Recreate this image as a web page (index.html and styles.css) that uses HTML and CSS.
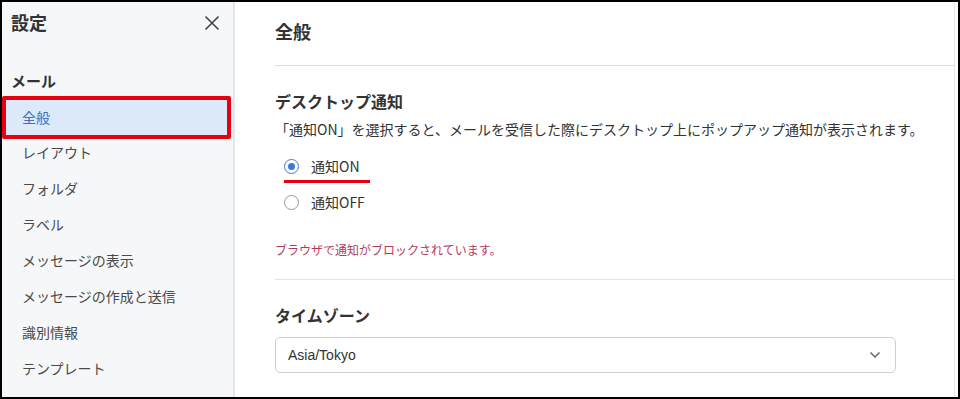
FILE: index.html
```html
<!DOCTYPE html>
<html lang="ja">
<head>
<meta charset="UTF-8">
<meta name="viewport" content="width=device-width, initial-scale=1.0">
<title>設定</title>
<link rel="stylesheet" href="styles.css">
</head>
<body>

<div class="frame">
  <!-- Sidebar -->
  <div class="sidebar">
    <div class="sidebar-head">
      <h1>設定</h1>
      <span class="close">
        <svg width="16" height="16" viewBox="0 0 16 16"><path d="M1.5 1.5 L14.5 14.5 M14.5 1.5 L1.5 14.5" stroke="#444" stroke-width="1.6" fill="none"/></svg>
      </span>
    </div>
    <div class="nav-group">メール</div>
    <ul class="nav">
      <li class="active">全般</li>
      <li>レイアウト</li>
      <li>フォルダ</li>
      <li>ラベル</li>
      <li>メッセージの表示</li>
      <li>メッセージの作成と送信</li>
      <li>識別情報</li>
      <li>テンプレート</li>
    </ul>
  </div>

  <!-- Main -->
  <div class="main">
    <div class="panel">
      <h2 class="page-title">全般</h2>

      <div class="section">
        <h3>デスクトップ通知</h3>
        <p class="desc">「通知ON」を選択すると、メールを受信した際にデスクトップ上にポップアップ通知が表示されます。</p>
        <label class="radio marked"><span class="dot checked"></span>通知ON</label>
        <label class="radio"><span class="dot"></span>通知OFF</label>
        <p class="warn">ブラウザで通知がブロックされています。</p>
      </div>

      <div class="section last">
        <h3>タイムゾーン</h3>
        <div class="select">
          <span>Asia/Tokyo</span>
          <svg width="12" height="8" viewBox="0 0 12 8"><path d="M1.5 1.5 L6 6 L10.5 1.5" stroke="#666" stroke-width="1.5" fill="none"/></svg>
        </div>
      </div>
    </div>
  </div>
</div>

</body>
</html>
```

FILE: styles.css
```css
* {
  box-sizing: border-box;
}
body {
  margin: 0;
  font-family: 'Noto Sans CJK JP', 'Noto Sans', sans-serif;
  color: #333;
  background-color: #fff;
}
.frame {
  display: flex;
  width: 960px;
  height: 399px;
  border: 2px solid #000;
  overflow: hidden;
}
/* Sidebar */
.sidebar {
  width: 233px;
  background-color: #f6f7f9;
  border-right: 2px solid #e2e4e8;
  flex-shrink: 0;
}
.sidebar-head {
  display: flex;
  justify-content: space-between;
  align-items: center;
  padding: 6px 13px 0 9px;
  height: 34px;
}
.sidebar-head h1 {
  margin: 0;
  font-size: 18px;
  font-weight: bold;
  color: #333;
}
.close {
  display: flex;
  margin-top: 2px;
}
.nav-group {
  margin-top: 34px;
  padding-left: 9px;
  font-size: 15px;
  font-weight: bold;
  color: #333;
  line-height: 22px;
}
.nav {
  list-style: none;
  margin: 4px 0 0 0;
  padding: 0;
}
.nav li {
  height: 36px;
  line-height: 36px;
  padding-left: 20px;
  font-size: 14px;
  color: #4a4a4a;
}
.nav li.active {
  height: 43px;
  line-height: 35px;
  margin-bottom: -5px;
  background-color: #dbe9f9;
  border: 4px solid #e60012;
  border-radius: 2px;
  padding-left: 16px;
  color: #3b6fc6;
  width: 229px;
}
/* Main */
.main {
  flex: 1;
  padding-right: 3px;
}
.panel {
  height: 100%;
  border-right: 1px solid #e6e6e6;
  padding-left: 40px;
}
.page-title {
  margin: 0;
  height: 64px;
  line-height: 58px;
  font-size: 18px;
  font-weight: bold;
  color: #333;
  border-bottom: 1px solid #dcdcdc;
}
.section {
  padding-top: 22px;
  border-bottom: 1px solid #e3e3e3;
  padding-bottom: 20px;
}
.section.last {
  border-bottom: none;
}
.section h3 {
  margin: 0;
  font-size: 16px;
  font-weight: bold;
  line-height: 26px;
  color: #333;
}
.desc {
  margin: 4px 0 8px 0;
  font-size: 14px;
  line-height: 22px;
  color: #333;
}
.radio {
  display: flex;
  align-items: center;
  height: 36px;
  font-size: 14px;
  color: #333;
  position: relative;
}
.radio.marked::after {
  content: "";
  position: absolute;
  left: 9px;
  width: 86px;
  bottom: 1px;
  height: 3px;
  background-color: #e60012;
}
.dot {
  width: 15px;
  height: 15px;
  border: 1px solid #999;
  border-radius: 50%;
  margin: 0 12px 0 9px;
  position: relative;
  background-color: #fff;
}
.dot.checked {
  border-color: #4a78c8;
}
.dot.checked::before {
  content: "";
  position: absolute;
  left: 3px;
  top: 3px;
  width: 7px;
  height: 7px;
  border-radius: 50%;
  background-color: #3a78e0;
}
.warn {
  margin: 21px 0 0 0;
  font-size: 12px;
  line-height: 18px;
  color: #b43a5c;
}
.select {
  display: flex;
  justify-content: space-between;
  align-items: center;
  margin-top: 9px;
  width: 621px;
  height: 36px;
  border: 1px solid #cfcfcf;
  border-radius: 5px;
  padding: 0 14px 0 12px;
  font-family: 'Liberation Sans', Arial, sans-serif;
  font-size: 14px;
  color: #333;
}
```
